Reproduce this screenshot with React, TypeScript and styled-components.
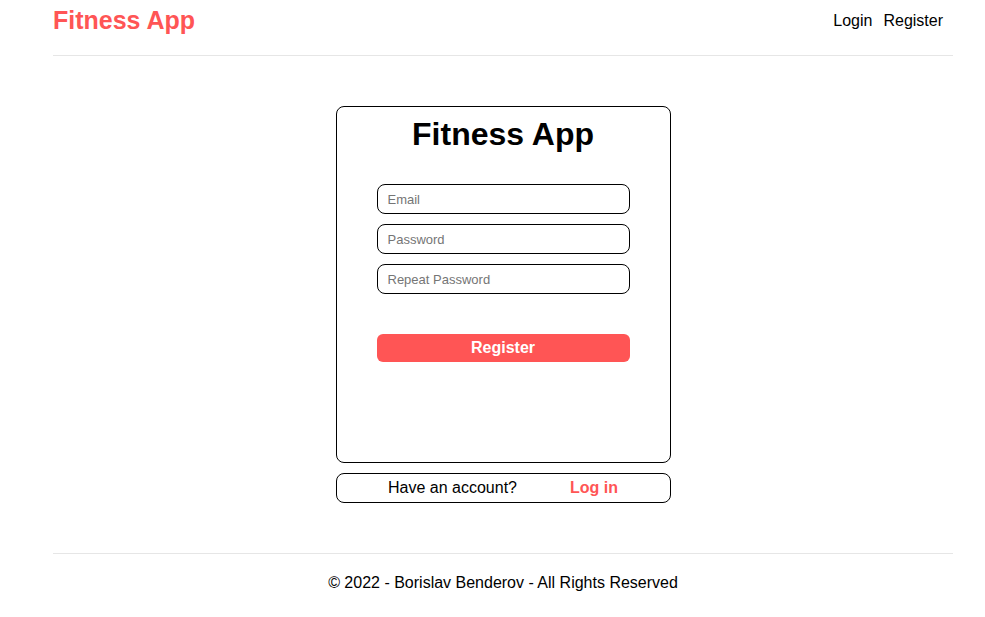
import React from "react";
import styled, { createGlobalStyle } from "styled-components";

const RED = "#ff5555";

const Global = createGlobalStyle`
  * { box-sizing: border-box; }
  body {
    margin: 0;
    background: #fff;
    font-family: "Liberation Sans", Arial, sans-serif;
    color: #000;
  }
`;

const Page = styled.div`
  width: 900px;
  margin-left: 53px;
`;

const Header = styled.header`
  display: flex;
  align-items: center;
  justify-content: space-between;
  height: 56px;
  padding-top: 2px;
  padding-bottom: 16px;
  border-bottom: 1px solid #e6e6e6;
`;

const Brand = styled.a`
  color: ${RED};
  font-size: 25px;
  font-weight: bold;
  text-decoration: none;
`;

const Nav = styled.nav`
  display: flex;
  gap: 11px;
  padding-right: 10px;
`;

const NavLink = styled.a`
  color: #000;
  font-size: 16px;
  text-decoration: none;
`;

const Main = styled.main`
  display: flex;
  flex-direction: column;
  align-items: center;
  padding: 50px 0 50px;
`;

const Card = styled.div`
  width: 335px;
  border: 1px solid #000;
  border-radius: 8px;
  display: flex;
  flex-direction: column;
  align-items: center;
`;

const FormCard = styled(Card)`
  height: 357px;
  padding-top: 9px;
`;

const Title = styled.h1`
  margin: 0 0 31px;
  font-size: 32px;
  font-weight: bold;
`;

const Form = styled.form`
  width: 253px;
  display: flex;
  flex-direction: column;
  gap: 10px;
`;

const Input = styled.input`
  width: 100%;
  height: 30px;
  border: 1px solid #000;
  border-radius: 8px;
  padding: 0 10px;
  font-family: "Liberation Sans", Arial, sans-serif;
  font-size: 13px;
  outline: none;
  &::placeholder { color: #757575; }
`;

const Submit = styled.button`
  margin-top: 30px;
  width: 100%;
  height: 28px;
  border: none;
  border-radius: 6px;
  background: ${RED};
  color: #fff;
  font-family: "Liberation Sans", Arial, sans-serif;
  font-size: 16px;
  font-weight: bold;
  cursor: pointer;
`;

const SwitchCard = styled(Card)`
  margin-top: 10px;
  height: 30px;
  flex-direction: row;
  justify-content: center;
  gap: 53px;
  font-size: 16px;
`;

const LoginLink = styled.a`
  color: ${RED};
  font-weight: bold;
  text-decoration: none;
`;

const Footer = styled.footer`
  border-top: 1px solid #e6e6e6;
  padding-top: 20px;
  text-align: center;
  font-size: 16px;
`;

export default function App() {
  return (
    <>
      <Global />
      <Page>
        <Header>
          <Brand href="#">Fitness App</Brand>
          <Nav>
            <NavLink href="#">Login</NavLink>
            <NavLink href="#">Register</NavLink>
          </Nav>
        </Header>
        <Main>
          <FormCard>
            <Title>Fitness App</Title>
            <Form onSubmit={(e) => e.preventDefault()}>
              <Input type="email" placeholder="Email" />
              <Input type="password" placeholder="Password" />
              <Input type="password" placeholder="Repeat Password" />
              <Submit type="submit">Register</Submit>
            </Form>
          </FormCard>
          <SwitchCard>
            <span>Have an account?</span>
            <LoginLink href="#">Log in</LoginLink>
          </SwitchCard>
        </Main>
        <Footer>© 2022 - Borislav Benderov - All Rights Reserved</Footer>
      </Page>
    </>
  );
}
